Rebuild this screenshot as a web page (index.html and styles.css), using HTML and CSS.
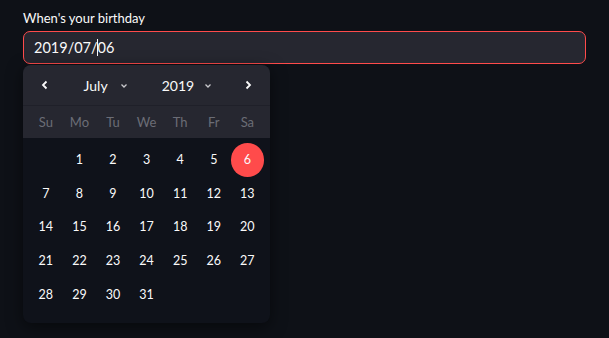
FILE: index.html
```html
<!DOCTYPE html>
<html>
<head>
<meta charset="utf-8">
<link rel="stylesheet" href="styles.css">
</head>
<body>
<div class="widget">
  <label class="label">When's your birthday</label>
  <div class="input"><span class="val">2019/07/</span><span class="caret"></span><span class="val">06</span></div>
  <div class="popover">
    <div class="head">
      <div class="nav">
        <span class="arrow"><svg width="10" height="10" viewBox="0 0 10 10"><path d="M6.5 1.5 L3 5 L6.5 8.5" fill="none" stroke="#fafafa" stroke-width="1.8"/></svg></span>
        <span class="sel month">July <svg class="chev" width="8" height="6" viewBox="0 0 8 6"><path d="M1.5 1.5 L4 4 L6.5 1.5" fill="none" stroke="#c8c8cc" stroke-width="1.3"/></svg></span>
        <span class="sel year">2019 <svg class="chev" width="8" height="6" viewBox="0 0 8 6"><path d="M1.5 1.5 L4 4 L6.5 1.5" fill="none" stroke="#c8c8cc" stroke-width="1.3"/></svg></span>
        <span class="arrow"><svg width="10" height="10" viewBox="0 0 10 10"><path d="M3.5 1.5 L7 5 L3.5 8.5" fill="none" stroke="#fafafa" stroke-width="1.8"/></svg></span>
      </div>
      <div class="weekdays">
        <span>Su</span><span>Mo</span><span>Tu</span><span>We</span><span>Th</span><span>Fr</span><span>Sa</span>
      </div>
    </div>
    <div class="days">
      <span></span><span>1</span><span>2</span><span>3</span><span>4</span><span>5</span><span class="selected">6</span>
      <span>7</span><span>8</span><span>9</span><span>10</span><span>11</span><span>12</span><span>13</span>
      <span>14</span><span>15</span><span>16</span><span>17</span><span>18</span><span>19</span><span>20</span>
      <span>21</span><span>22</span><span>23</span><span>24</span><span>25</span><span>26</span><span>27</span>
      <span>28</span><span>29</span><span>30</span><span>31</span>
    </div>
  </div>
</div>
</body>
</html>
```

FILE: styles.css
```css
html, body {
  margin: 0;
  padding: 0;
  background: #0e1117;
  width: 609px;
  height: 338px;
  overflow: hidden;
  font-family: "Lato", "Noto Sans", sans-serif;
  color: #fafafa;
}
.widget {
  padding: 10px 23px 0 23px;
  position: relative;
}
.label {
  display: block;
  font-size: 13px;
  line-height: 16px;
  height: 21px;
  color: #fafafa;
}
.input {
  box-sizing: border-box;
  height: 33px;
  width: 563px;
  border: 1px solid #ff4b4b;
  border-radius: 7px;
  background: #262730;
  display: flex;
  align-items: center;
  padding-left: 10px;
  font-size: 14.5px;
}
.caret {
  display: inline-block;
  width: 1px;
  height: 17px;
  background: #fafafa;
  margin: 0 -1px 0 0;
  position: relative;
  left: -1px;
}
.popover {
  position: absolute;
  left: 23px;
  top: 65px;
  width: 247px;
  border-radius: 8px;
  background: #0f121a;
  box-shadow: 0 4px 16px rgba(0,0,0,0.5);
  overflow: hidden;
  padding-bottom: 12px;
}
.head {
  background: #262730;
}
.nav {
  height: 40px;
  display: flex;
  align-items: center;
  border-bottom: 1px solid #1f2029;
  font-size: 14px;
  position: relative;
}
.arrow {
  width: 33.6px;
  display: flex;
  justify-content: center;
  margin-left: 5px;
  margin-right: 5px;
}
.sel {
  display: flex;
  align-items: center;
  gap: 12px;
}
.year { gap: 10px; }
.month { margin-left: 17px; }
.year { margin-left: 34px; margin-right: auto; }
.chev { margin-top: 1px; }
.weekdays {
  height: 32px;
  display: grid;
  grid-template-columns: repeat(7, 33.6px);
  padding: 0 6px;
  align-items: center;
  font-size: 13px;
  color: #6b6d76;
  text-align: center;
}
.days {
  display: grid;
  grid-template-columns: repeat(7, 33.6px);
  grid-auto-rows: 33.6px;
  padding: 5px 6px 0 6px;
  font-size: 12.5px;
  text-align: center;
}
.days span {
  display: flex;
  align-items: center;
  justify-content: center;
}
.days .selected {
  background: #ff4b4b;
  border-radius: 50%;
}
```
